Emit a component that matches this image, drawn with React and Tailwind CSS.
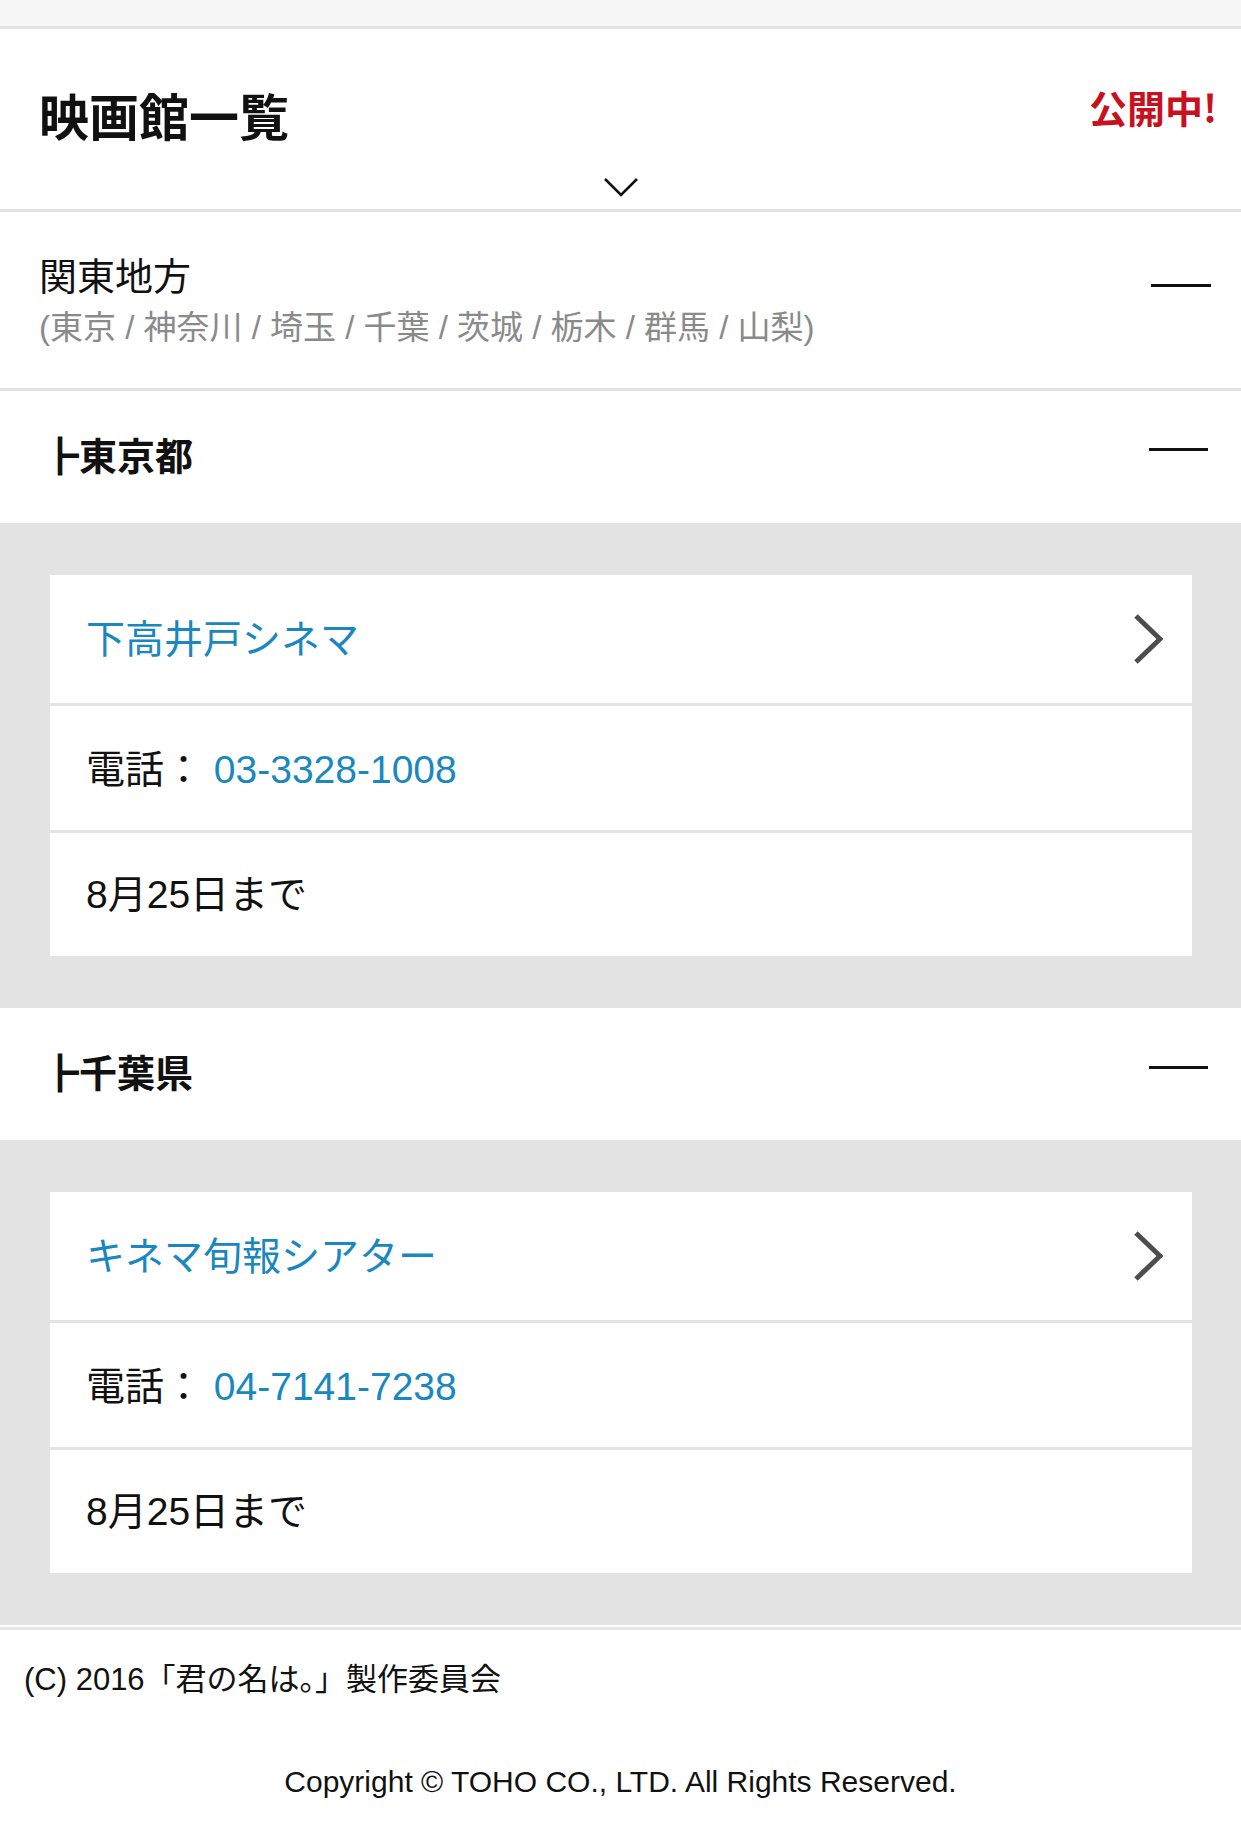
// Theater list page.
const theaters = [
  {
    pref: "東京都",
    name: "下高井戸シネマ",
    tel: "03-3328-1008",
    until: "8月25日まで",
    gap: "mb-[16px]",
  },
  {
    pref: "千葉県",
    name: "キネマ旬報シアター",
    tel: "04-7141-7238",
    until: "8月25日まで",
    gap: "mb-[14px]",
  },
];

// Right chevron in the theater name row.
function ChevronRight() {
  return (
    <svg width="30" height="52" viewBox="0 0 30 52" fill="none">
      <path d="M3 3 L27 26 L3 49" stroke="#4d4d4d" strokeWidth="5" />
    </svg>
  );
}

// Down chevron under the page title.
function ChevronDown() {
  return (
    <svg width="36" height="20" viewBox="0 0 36 20" fill="none">
      <path d="M2 2 L18 18 L34 2" stroke="#111" strokeWidth="2.6" />
    </svg>
  );
}

function PrefSection({ item }) {
  return (
    <div>
      {/* Prefecture heading */}
      <div className="flex h-[132px] items-center justify-between pl-[41px] pr-[33px] bg-white">
        <h3 className="mb-[6px] font-['Noto_Sans_CJK_JP',sans-serif] font-bold text-[38px] leading-none text-[#111]">
          ┣{item.pref}
        </h3>
        <div className={`h-[3px] w-[59px] bg-[#111] ${item.gap}`} />
      </div>

      {/* Theater card */}
      <div className="bg-[#e3e3e3] pt-[52px] pb-[52px] pl-[50px] pr-[49px]">
        <div className="bg-white">
          <div className="flex h-[128px] items-center justify-between pl-[36px] pr-[29px]">
            <span className="text-[39px] leading-none text-[#1a87bf]">
              {item.name}
            </span>
            <ChevronRight />
          </div>
          <div className="flex h-[127px] items-center border-t-[3px] border-[#e3e3e3] pl-[36px]">
            <span className="mt-[2px] text-[39px] leading-none text-[#111]">
              電話：{" "}
              <span className="text-[#1a87bf]">{item.tel}</span>
            </span>
          </div>
          <div className="flex h-[126px] items-center border-t-[3px] border-[#e3e3e3] pl-[36px]">
            <span className="text-[39px] leading-none text-[#111]">
              {item.until}
            </span>
          </div>
        </div>
      </div>
    </div>
  );
}

export default function App() {
  return (
    <div className="min-h-[1835px] w-[1241px] bg-white font-['Liberation_Sans','Noto_Sans_CJK_JP',sans-serif]">
      {/* Top strip */}
      <div className="h-[29px] bg-[#f7f7f7] border-b-[3px] border-[#e4e4e4]" />

      {/* Header */}
      <div className="flex flex-col h-[183px] pt-[60px] pb-[12px] border-b-[3px] border-[#e3e3e3]">
        <div className="flex items-start justify-between pl-[39px] pr-[24px]">
          <h1 className="font-['Noto_Sans_CJK_JP',sans-serif] font-bold text-[50px] leading-none text-[#111]">
            映画館一覧
          </h1>
          <span className="-mt-[1px] font-['Noto_Sans_CJK_JP',sans-serif] font-bold text-[38px] leading-none text-[#c8111f]">
            公開中!
          </span>
        </div>
        <div className="mt-auto flex justify-center">
          <ChevronDown />
        </div>
      </div>

      {/* Region */}
      <div className="flex items-start justify-between h-[179px] pt-[46px] pl-[39px] pr-[30px] border-b-[3px] border-[#e3e3e3]">
        <div className="flex flex-col gap-[15px]">
          <p className="text-[38px] leading-none text-[#111]">関東地方</p>
          <p className="text-[33px] leading-none text-[#8a8a8a]">
            (東京 / 神奈川 / 埼玉 / 千葉 / 茨城 / 栃木 / 群馬 / 山梨)
          </p>
        </div>
        <div className="mt-[26px] h-[3px] w-[60px] bg-[#111]" />
      </div>

      {theaters.map((item) => (
        <PrefSection key={item.pref} item={item} />
      ))}

      {/* Footer */}
      <div className="mt-[2px] border-t-[3px] border-[#e6e6e6] pt-[34px] pb-[37px]">
        <p className="pl-[24px] text-[31px] leading-none text-[#111]">
          (C) 2016「君の名は。」製作委員会
        </p>
        <p className="mt-[72px] text-center text-[30px] leading-none text-[#111]">
          Copyright © TOHO CO., LTD. All Rights Reserved.
        </p>
      </div>
    </div>
  );
}
